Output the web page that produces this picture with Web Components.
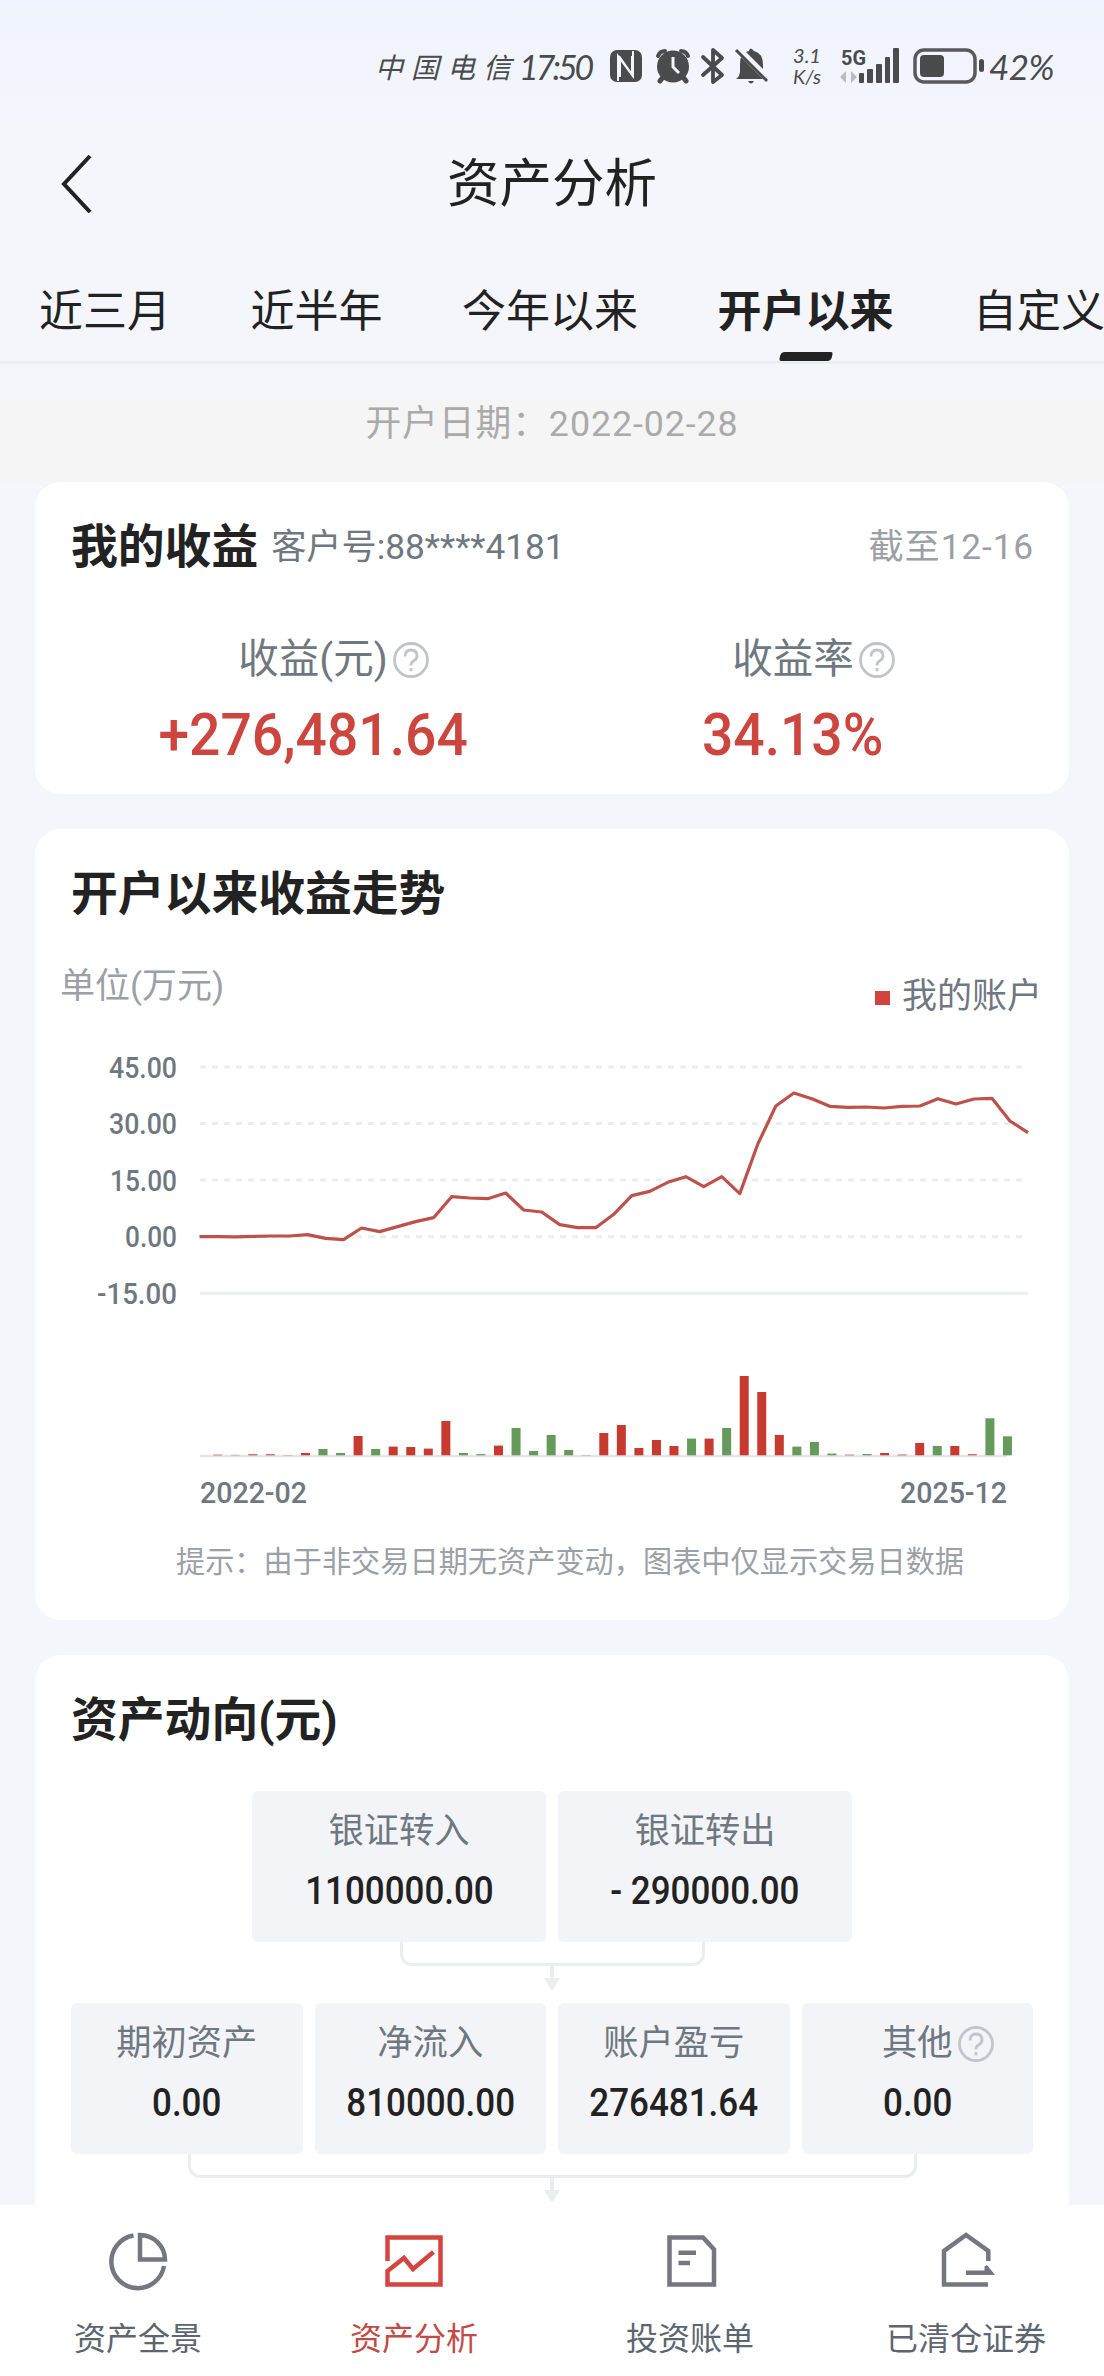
<!DOCTYPE html>
<html lang="zh-CN">
<head>
<meta charset="UTF-8">
<title>资产分析</title>
<style>
    body {
        margin: 0;
        width: 1104px;
        height: 2376px;
        overflow: hidden;
        background: #f4f6fb;
        color: #222;
        font-family: Roboto, "Noto Sans CJK SC", sans-serif;
    }
</style>
</head>
<body>
<asset-page></asset-page>

<script>
const define = (name, html, setup) => {
    const template = document.createElement('template');
    template.innerHTML = html;

    customElements.define(name, class extends HTMLElement {
        constructor() {
            super();
            this.attachShadow({ mode: 'open' });
            this.shadowRoot.appendChild(template.content.cloneNode(true));
        }

        connectedCallback() {
            if (setup) setup(this, this.shadowRoot);
        }
    });
};

define('status-bar', `
    <style>
        :host {
            display: flex;
            box-sizing: border-box;
            height: 130px;
            padding: 46px 0 44px 375px;
            align-items: center;
            color: #4a4b4d;
            white-space: nowrap;
        }
        svg { display: block; flex: none; overflow: visible; }
        .carrier { width: 144px; font: italic 400 28px "Noto Sans CJK SC", sans-serif; letter-spacing: 8px; }
        .time { width: 90px; font: italic 400 34px Lato, sans-serif; letter-spacing: -3px; }
        .speed { width: 46px; margin-left: 14px; font: italic 400 20px/21px Lato, sans-serif; text-align: center; }
        .battery { font: italic 400 35px Lato, sans-serif; letter-spacing: -.5px; margin-left: 5px; }
        .net { font: 700 21px Roboto, sans-serif; }
    </style>
    <span class="carrier">中国电信</span>
    <span class="time">17:50</span>
    <svg width="34" height="36" viewBox="0 0 34 36">
        <rect x="1" y="2" width="32" height="32" rx="7" fill="#4a4b4d"/>
        <path d="M9 33V8l14 19V8M11 29V9M24 3v25L10 8" fill="none" stroke="#f2f5fc" stroke-width="2"/>
    </svg>
    <svg width="36" height="36" viewBox="0 0 36 36" style="margin-left:12px">
        <g fill="none" stroke="#4a4b4d" stroke-width="5" stroke-linecap="round">
            <path d="M3 8q2-5 7-5M26 3q5 0 7 5" stroke-width="4"/>
            <path d="M8 29l-3 4M28 29l3 4"/>
        </g>
        <circle cx="18" cy="18.500" r="16" fill="#4a4b4d"/>
        <path d="M18 9v10l6 6" fill="none" stroke="#f2f5fc" stroke-width="3"/>
    </svg>
    <svg width="24" height="38" viewBox="0 0 24 38" style="margin-left:10px">
        <path d="M2 10l19 18-9 7V3l9 8L2 28" fill="none" stroke="#4a4b4d" stroke-width="3.800" stroke-linejoin="round" stroke-linecap="round"/>
    </svg>
    <svg width="36" height="38" viewBox="0 0 36 38" style="margin-left:9px">
        <path d="M2 32q4-3 4-8v-7Q6 5 15 4q1-5 5 0 9 2 9 14v6q0 4 4 8Z" fill="#4a4b4d"/>
        <path d="M14 34h6q-3 5-6 0" fill="#4a4b4d"/>
        <path d="M5 3l28 28" stroke="#f2f5fc" stroke-width="7"/>
        <path d="M2 3l31 31" stroke="#4a4b4d" stroke-width="3"/>
    </svg>
    <span class="speed">3.1<br>K/s</span>
    <svg width="60" height="50" viewBox="0 -6 60 50" style="margin-left:10px">
        <text class="net" x="1" y="17.500" textLength="25" lengthAdjust="spacingAndGlyphs" fill="#4a4b4d">5G</text>
        <path d="M0 30l6-6v12zM17 30l-6-6v12z" fill="#b9bcc1"/>
        <g fill="#4a4b4d">
            <rect x="19" y="26" width="5" height="10" rx="1"/>
            <rect x="27" y="22" width="6" height="14" rx="1"/>
            <rect x="36" y="17" width="6" height="19" rx="1"/>
            <rect x="45" y="10" width="5" height="26" rx="1"/>
            <rect x="53" y="1" width="6" height="35" rx="1"/>
        </g>
    </svg>
    <svg width="71" height="38" viewBox="0 0 71 38" style="margin-left:13px">
        <rect x="2" y="3" width="60" height="32" rx="9" fill="none" stroke="#58595b" stroke-width="3.500"/>
        <rect x="7" y="8" width="24" height="22" rx="4" fill="#4a4b4d"/>
        <rect x="66" y="12" width="5" height="13" rx="2.500" fill="#4a4b4d"/>
    </svg>
    <span class="battery">42%</span>
`);

define('page-header', `
    <style>
        :host {
            display: grid;
            grid-template-columns: 152px 1fr 152px;
            height: 104px;
            align-items: center;
            text-align: center;
            font-size: 52.5px;
            line-height: 104px;
        }
        svg { display: block; margin: 2px 0 0 58px; }
        span { padding-top: 5px; line-height: 99px; }
    </style>
    <svg width="36" height="60" viewBox="0 0 36 60"><path d="M32 3L6 31l26 28" fill="none" stroke="#222" stroke-width="4"/></svg>
    <span><slot></slot></span>
`);

define('period-tab', `
    <style>
        :host { display: flex; flex-direction: column; align-items: center; flex: none; height: 127px; font-size: 44px; }
        span { line-height: 60px; margin-top: 48px; }
        i { display: none; width: 52px; height: 9px; margin-top: 10px; background: #222; border-radius: 4px 2px 4px 2px; transform: skewX(-12deg); }
        :host([active]) { font-weight: 700; }
        :host([active]) i { display: block; }
    </style>
    <span><slot></slot></span><i></i>
`);

define('period-tabs', `
    <style>
        :host {
            display: flex;
            gap: 79.5px;
            height: 127px;
            padding-left: 39px;
            border-bottom: 3px solid #ebedef;
            overflow: hidden;
        }
    </style>
    <slot></slot>
`);

define('open-date', `
    <style>
        :host {
            display: block;
            height: 118px;
            background: linear-gradient(#f4f6fb 33px, #f5f5f5 35px);
            color: #aaa;
            text-align: center;
            font-size: 35.8px;
            line-height: 120px;
            letter-spacing: .9px;
        }
    </style>
    <slot></slot>
`);

define('white-card', `
    <style>
        :host { display: block; box-sizing: border-box; margin: 0 35px 35px; border-radius: 26px; background: #fff; }
        header { display: flex; align-items: center; height: 126px; padding: 0 35px 0 36px; }
        h2 { margin: 0; padding-top: 3px; font-size: 46.800px; font-weight: 700; line-height: 60px; }
    </style>
    <header><h2></h2><slot name="extra"></slot></header>
    <slot></slot>
`, (el, root) => {
    root.querySelector('h2').textContent = el.getAttribute('heading');
});

define('help-icon', `
    <style>
        :host { display: block; width: 38px; height: 38px; }
        svg { display: block; }
    </style>
    <svg width="38" height="38" viewBox="0 0 38 38" fill="none" stroke="#c1c5cb" stroke-width="2.800">
        <circle cx="19" cy="19" r="16.500"/>
        <path d="M13 15.500q0-6.500 6-6.500t6 6q0 3-3.500 5-2.500 1.500-2.500 4.500"/>
        <path d="M19 27v3.200"/>
    </svg>
`);

// label above value; the help mark hangs to the right so the text stays centred
define('stat-cell', `
    <style>
        :host { display: block; text-align: center; color: #6f7880; }
        .label { font-size: var(--label-size, 35.3px); line-height: var(--label-line, 50px); }
        .label span { position: relative; display: inline-block; }
        help-icon { position: absolute; left: calc(100% + 4px); top: calc(50% - 18px); }
        .value { font-size: var(--value-size, 38px); line-height: var(--value-line, 70px); font-weight: 500; color: var(--value-color, #222); }
        .value span { display: inline-block; transform: scaleX(var(--squeeze, .92)); }
    </style>
    <div class="label"><span><slot></slot></span></div>
    <div class="value"><span></span></div>
`, (el, root) => {
    root.querySelector('.value span').textContent = el.getAttribute('value');
    if (el.hasAttribute('help')) {
        root.querySelector('.label span').appendChild(document.createElement('help-icon'));
    }
});

define('profit-card', `
    <style>
        :host { display: block; }
        white-card { height: 312px; }
        .customer, .until { margin-top: -3px; font-size: 35.2px; }
        .customer { margin-left: 13px; color: #6f7880; }
        .until { margin-left: auto; color: #9aa0a6; letter-spacing: .9px; }
        .stats {
            display: grid;
            grid-template-columns: 1fr 1fr;
            padding: 20px 36px 0 38px;
            --label-size: 40.5px;
            --label-line: 62px;
            --value-size: 60px;
            --value-line: 89px;
            --value-color: #cc453f;
        }
    </style>
    <white-card heading="我的收益">
        <span slot="extra" class="customer">客户号:88****4181</span>
        <span slot="extra" class="until">截至12-16</span>
        <div class="stats">
            <stat-cell value="+276,481.64" help>收益(元)</stat-cell>
            <stat-cell value="34.13%" help>收益率</stat-cell>
        </div>
    </white-card>
`);

define('trend-chart', `
    <style>
        :host { display: block; height: 490px; }
        svg { display: block; }
        text { font-family: Roboto, sans-serif; font-size: 30px; font-weight: 500; fill: #6f7880; }
    </style>
    <svg width="1034" height="490" viewBox="35 1030 1034 490"></svg>
`, (el, root) => {
    const line = [590, 590, 590.500, 589, 588, 588, 584, 595, 599, 564, 575, 560, 545, 533, 470, 474, 476, 459, 510, 516, 554, 563, 563,
        523, 467, 454, 427, 410, 440, 410, 461, 312, 198, 159, 176, 199, 202, 201, 204, 199, 198, 176, 192, 177, 175, 243, 278];
    // sign = colour (plus red, minus green), size = bar height
    const bars = [.6, -.4, 1, 1, -.3, 2.300, -6.300, -2.300, 19.300, -6.300, 8.700, 8.300, 6.700, 34.300, -2.300, -1.200, 9.700, -27.300, -4.300,
        -20.300, -5.300, -.3, 22.300, 30.300, 7.300, 15.300, 9.300, -16.700, 16.700, -27.300, 79.300, 63.300, 20.300, -8.700, -13.300, -1.700, .6,
        -1.300, 2.300, .7, 12.300, -9.300, 9.300, 1, -37, -19];
    const ticks = [['45.00', 109], ['30.00', 109], ['15.00', 110], ['0.00', 125], ['-15.00', 97]];

    let out = '';
    ticks.forEach(([label, x], i) => {
        const y = 1067 + i * 56.550;
        const dash = i < 4 ? 'stroke-dasharray="6 6"' : '';
        out += `<text x="${x}" y="${y + 10.500}" textLength="${177 - x}" lengthAdjust="spacingAndGlyphs">${label}</text>
            <path d="M200 ${y}H${i < 4 ? 1024 : 1028}" stroke="#ebedee" stroke-width="3" ${dash}/>`;
    });
    out += '<path d="M200 1456H1007" stroke="#e6e6e6" stroke-width="2.500"/>';
    bars.forEach((v, i) => {
        const h = Math.abs(v);
        out += `<rect x="${213.200 + i * 17.550}" y="${1455.300 - h}" width="9" height="${h}" fill="${v > 0 ? '#c63a30' : '#659a5b'}"/>`;
    });
    const points = line.map((y, i) => `${199.500 + i * 18.010},${1040 + y / 3}`).join(' ');
    out += `<polyline points="${points}" fill="none" stroke="#bd514b" stroke-width="3.200" stroke-linejoin="round"/>
        <text x="200" y="1503" textLength="107" lengthAdjust="spacingAndGlyphs">2022-02</text>
        <text x="900" y="1503" textLength="107" lengthAdjust="spacingAndGlyphs">2025-12</text>`;
    root.querySelector('svg').innerHTML = out;
});

define('trend-card', `
    <style>
        :host { display: block; }
        white-card { height: 791px; }
        .bar { display: flex; justify-content: space-between; height: 75px; padding: 0 27px 0 25px; font-size: 35px; line-height: 50px; }
        .unit { margin-top: 7px; color: #9aa0a6; }
        .legend { display: flex; align-items: center; height: 50px; margin-top: 17px; color: #6f7880; }
        .legend i { width: 15px; height: 14px; margin: 2px 12px 0 0; background: #d1443d; }
        .tip { padding-left: 36px; color: #9aa0a6; font-size: 29.200px; line-height: 84px; text-align: center; }
    </style>
    <white-card heading="开户以来收益走势">
        <div class="bar">
            <span class="unit">单位(万元)</span>
            <span class="legend"><i></i>我的账户</span>
        </div>
        <trend-chart></trend-chart>
        <div class="tip">提示：由于非交易日期无资产变动，图表中仅显示交易日数据</div>
    </white-card>
`);

define('flow-link', `
    <style>
        :host { display: flex; flex-direction: column; align-items: center; height: 61px; }
        .fork { box-sizing: border-box; width: var(--fork); height: 24px; border: 3px solid #ebedee; border-top: 0; border-radius: 0 0 12px 12px; }
        .stem { width: 4px; height: 12px; background: #ebedee; }
        .tip { border: 8px solid transparent; border-top: 13px solid #ebedee; border-bottom: 0; }
    </style>
    <div class="fork"></div>
    <div class="stem"></div>
    <div class="tip"></div>
`);

define('flow-card', `
    <style>
        :host { display: block; }
        white-card { height: 560px; margin-bottom: 0; border-radius: 26px 26px 0 0; }
        .row { display: grid; grid-auto-flow: column; grid-auto-columns: 1fr; gap: 12px; margin: 0 36px; }
        .two { margin: 10px 217px 0; }
        stat-cell { height: 136px; padding-top: 15px; border-radius: 6px; background: #f3f4f7; }
    </style>
    <white-card heading="资产动向(元)">
        <div class="row two">
            <stat-cell value="1100000.00">银证转入</stat-cell>
            <stat-cell value="- 290000.00">银证转出</stat-cell>
        </div>
        <flow-link style="--fork:305px"></flow-link>
        <div class="row">
            <stat-cell value="0.00">期初资产</stat-cell>
            <stat-cell value="810000.00">净流入</stat-cell>
            <stat-cell value="276481.64">账户盈亏</stat-cell>
            <stat-cell value="0.00" help>其他</stat-cell>
        </div>
        <flow-link style="--fork:729px"></flow-link>
    </white-card>
`);

define('nav-item', `
    <style>
        :host { display: flex; flex: 1; flex-direction: column; align-items: center; padding-top: 26px; color: #5d6670; font-size: 32px; --icon: #74777f; }
        :host([active]) { color: #c24b45; --icon: #d5443f; }
        span { margin-top: 24px; line-height: 48px; }
        ::slotted(svg) { display: block; width: 60px; height: 60px; fill: none; stroke: var(--icon); stroke-width: 4.500px; }
    </style>
    <slot name="icon"></slot>
    <span><slot></slot></span>
`);

define('bottom-nav', `
    <style>
        :host { position: relative; display: flex; height: 171px; background: #fff; }
    </style>
    <nav-item><svg slot="icon" viewBox="0 0 60 60">
        <path d="M25.500 4.500A26.500 26.500 0 1 0 56 35"/>
        <path d="M32 4A25 25 0 0 1 57 28.500H32Z"/>
    </svg>资产全景</nav-item>
    <nav-item active><svg slot="icon" viewBox="0 0 60 60">
        <path d="M3.500 30V6.500H56.500V53.500H3.500V40L20 27 29 38 49.500 21"/>
    </svg>资产分析</nav-item>
    <nav-item><svg slot="icon" viewBox="0 0 60 60">
        <path d="M9.500 6.500H43L54 18.500V53.500H9.500ZM18.500 21.700H36M18.500 32H30"/>
    </svg>投资账单</nav-item>
    <nav-item><svg slot="icon" viewBox="0 0 60 60">
        <path d="M52.300 30V20L30 4 8 20V53.500H52M30 41.700H52"/>
        <path d="M48.500 35.500L51 34 59 44H48.500Z" fill="#74777f" stroke="none"/>
    </svg>已清仓证券</nav-item>
`);

define('asset-page', `
    <style>
        :host { display: flex; flex-direction: column; height: 2376px; background: linear-gradient(#f0f4fe, #f4f6fb 150px); }
        main { height: 1723px; overflow: hidden; }
    </style>
    <status-bar></status-bar>
    <page-header>资产分析</page-header>
    <period-tabs>
        <period-tab>近三月</period-tab>
        <period-tab>近半年</period-tab>
        <period-tab>今年以来</period-tab>
        <period-tab active>开户以来</period-tab>
        <period-tab>自定义</period-tab>
    </period-tabs>
    <open-date>开户日期：2022-02-28</open-date>
    <main>
        <profit-card></profit-card>
        <trend-card></trend-card>
        <flow-card></flow-card>
    </main>
    <bottom-nav></bottom-nav>
`);
</script>
</body>
</html>
